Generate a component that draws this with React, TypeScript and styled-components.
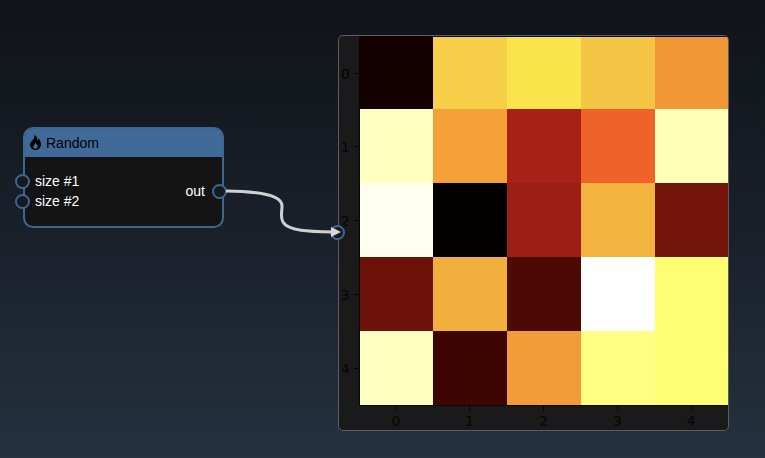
import React from "react";
import styled, { createGlobalStyle } from "styled-components";

const GlobalStyle = createGlobalStyle`
  body { margin: 0; overflow: hidden; }
  *, *::before, *::after { box-sizing: border-box; }
`;

const Canvas = styled.main`
  position: relative;
  width: 765px;
  height: 458px;
  overflow: hidden;
  background: linear-gradient(180deg, #101419 0%, #1a202a 50%, #25313f 100%);
  font-family: "Liberation Sans", Arial, sans-serif;
`;

const NodeCard = styled.section`
  position: absolute;
  left: 23px;
  top: 127px;
  width: 201px;
  height: 101px;
  display: flex;
  flex-direction: column;
  border: 2px solid #3d6793;
  border-radius: 10px;
  background: #141414;
`;

const NodeHeader = styled.header`
  display: flex;
  align-items: center;
  gap: 5px;
  height: 28px;
  padding: 0 0 0 5px;
  border-radius: 7px 7px 0 0;
  background: #406a98;
  color: #000;
  font-size: 14px;
  line-height: 16px;
`;

const FlameIcon = styled.svg`
  width: 11px;
  height: 15px;
  margin-top: -1px;
`;

const NodeBody = styled.div`
  display: flex;
  flex: 1;
  justify-content: space-between;
  align-items: flex-start;
  margin: 0 -5px 0 -10px;
  padding-top: 14px;
`;

const Ports = styled.div<{ $offset?: number }>`
  display: flex;
  flex-direction: column;
  margin-top: ${(p) => p.$offset ?? 0}px;
`;

const Port = styled.div<{ $gap?: number }>`
  display: flex;
  align-items: center;
  gap: ${(p) => p.$gap ?? 5}px;
  height: 20px;
  color: #fff;
  font-size: 14px;
  line-height: 20px;
`;

const Handle = styled.span`
  width: 15px;
  height: 15px;
  border: 2px solid #3d6793;
  border-radius: 50%;
  background: #161a20;
`;

const InputHandle = styled(Handle)`
  position: absolute;
  left: 330px;
  top: 225px;
  background: #171a1e;
`;

const Wire = styled.svg`
  position: absolute;
  left: 220px;
  top: 180px;
`;

const Plot = styled.section`
  position: absolute;
  left: 338px;
  top: 35px;
  width: 391px;
  height: 396px;
  display: grid;
  grid-template-columns: 20px 368px;
  grid-template-rows: 368px 1fr;
  padding-top: 1px;
  border: 1px solid #5c5d5e;
  border-radius: 5px;
  overflow: hidden;
  background: #1a1a1a;
  color: #050505;
  font-family: "DejaVu Sans", sans-serif;
  font-size: 13.5px;
  line-height: 14px;
`;

const Heatmap = styled.div`
  display: grid;
  grid-template-columns: 73px 74px 74px 74px 73px;
  grid-template-rows: 72px 74px 74px 74px 74px;
  margin-left: 1px;
  width: 368px;
  box-shadow: 0 0 0 1px #080808;
`;

const Cell = styled.div<{ $color: string }>`
  background: ${(p) => p.$color};
`;

const YAxis = styled.div`
  display: grid;
  grid-template-rows: 72px 74px 74px 74px 74px;
`;

const YLabel = styled.div`
  display: flex;
  align-items: center;
  justify-content: space-between;
  padding: 1px 0 0 2px;
  &::after { content: ""; width: 5px; height: 1px; background: #050505; }
`;

const XAxis = styled.div`
  grid-column: 2;
  display: grid;
  grid-template-columns: 73px 74px 74px 74px 73px;
`;

const XLabel = styled.div`
  display: flex;
  flex-direction: column;
  align-items: center;
  gap: 3px;
  padding: 1px 0 0 1px;
  &::before { content: ""; width: 1px; height: 5px; background: #050505; }
`;

const colors = [
  "#150000", "#f8cf48", "#fae44b", "#f5c645", "#ef9835",
  "#ffffc0", "#f3a039", "#a72116", "#ef632b", "#ffffb8",
  "#fffff0", "#050000", "#9c1e14", "#f2b43f", "#72140b",
  "#6c120a", "#f2af3e", "#4c0a04", "#ffffff", "#ffff73",
  "#ffffc0", "#3e0602", "#f19c38", "#ffff84", "#ffff73",
];
const ticks = [0, 1, 2, 3, 4];

export default function App() {
  return (
    <>
      <GlobalStyle />
      <Canvas>
        <NodeCard>
          <NodeHeader>
            <FlameIcon viewBox="0 0 11 15" fill="#000">
              <path fillRule="evenodd" d="M4.4 0C7 1.2 7.5 3.3 7.2 5.2C8 4.9 8.3 4.2 8.4 3.5C10 5.100 11 7.200 11 9.200C11 12.600 8.600 15 5.500 15C2.400 15 0 12.600 0 9.500C0 5.800 5.200 4.800 4.400 0ZM5.600 7.500C5.500 9.200 3.300 9.900 3.300 11.700C3.300 13 4.300 13.800 5.500 13.800C6.800 13.800 7.800 12.900 7.800 11.600C7.800 10 6.500 9.200 5.600 7.500Z" />
            </FlameIcon>
            Random
          </NodeHeader>
          <NodeBody>
            <Ports>
              <Port><Handle />size #1</Port>
              <Port><Handle />size #2</Port>
            </Ports>
            <Ports $offset={10}>
              <Port $gap={7}>out<Handle /></Port>
            </Ports>
          </NodeBody>
        </NodeCard>
        <Plot>
          <YAxis>{ticks.map((t) => <YLabel key={t}>{t}</YLabel>)}</YAxis>
          <Heatmap>{colors.map((c, i) => <Cell key={i} $color={c} />)}</Heatmap>
          <XAxis>{ticks.map((t) => <XLabel key={t}>{t}</XLabel>)}</XAxis>
        </Plot>
        <InputHandle />
        <Wire width="125" height="62" viewBox="220 180 125 62" fill="none">
          <path d="M226 191C256 191.500 282 194 282 206C282 213 280 217 283 222C288 231 309 231.500 333 232" stroke="#d0d0d0" strokeWidth="3" />
          <path d="M331 227L341 232L331 237Z" fill="#d8d8d8" />
        </Wire>
      </Canvas>
    </>
  );
}
